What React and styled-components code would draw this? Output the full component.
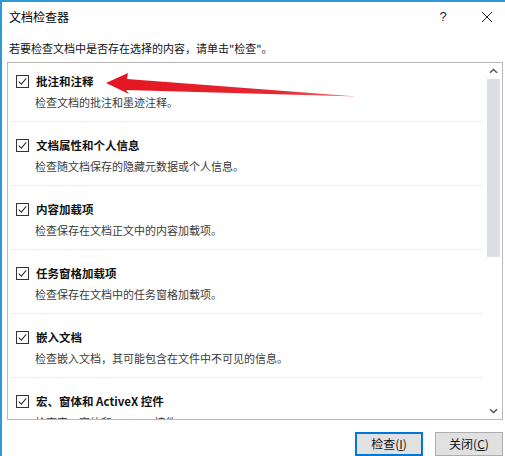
import React from "react";
import styled, { createGlobalStyle } from "styled-components";

const GlobalStyle = createGlobalStyle`
  html, body { margin: 0; padding: 0; background: #fff; }
  body { font-family: "Noto Sans CJK SC", "Noto Sans", sans-serif; }
  * { box-sizing: border-box; }
`;

const Window = styled.div`
  position: relative;
  width: 505px;
  height: 456px;
  background: #fff;
  border-left: 2px solid #2d9ad6;
  border-top: 2px solid #2d9ad6;
  overflow: hidden;
  display: flex;
  flex-direction: column;
  color: #000;
`;

const TitleBar = styled.div`
  height: 30px;
  display: flex;
  align-items: center;
  padding-left: 7px;
`;

const Title = styled.div`
  flex: 1;
  font-size: 12px;
  line-height: 14px;
`;

const Help = styled.div`
  width: 12px;
  text-align: center;
  font-size: 13px;
  line-height: 14px;
  color: #222;
  margin-right: 32px;
  font-family: "Liberation Sans", sans-serif;
`;

const Close = styled.div`
  width: 12px;
  height: 12px;
  margin-right: 12px;
  display: flex;
`;

const Instruction = styled.div`
  margin-top: 10px;
  padding-left: 7px;
  font-size: 11px;
  line-height: 14px;
  color: #111;
`;

const ListBox = styled.div`
  margin-top: 7px;
  margin-left: 5px;
  width: 496px;
  height: 358px;
  border: 1px solid #b9b9b9;
  display: flex;
`;

const Content = styled.div`
  flex: 1;
  overflow: hidden;
`;

const Item = styled.div`
  height: ${(p) => (p.$first ? 59 : 64)}px;
  padding-top: ${(p) => (p.$first ? 11 : 16)}px;
  margin-left: 4px;
  margin-right: 2px;
  padding-left: 4px;
  border-bottom: 1px solid #ededed;
`;

const TitleRow = styled.div`
  display: flex;
  align-items: center;
  gap: 7px;
  height: 14px;
`;

const ItemTitle = styled.div`
  font-size: 11.5px;
  line-height: 14px;
  font-weight: 700;
  color: #111;
`;

const Desc = styled.div`
  margin-top: 7px;
  padding-left: 19px;
  font-size: 11px;
  line-height: 14px;
  color: #3a3a3a;
  white-space: nowrap;
`;

const Scrollbar = styled.div`
  width: 17px;
  display: flex;
  flex-direction: column;
  align-items: center;
`;

const ArrowBtn = styled.div`
  height: 16px;
  width: 100%;
  display: flex;
  align-items: center;
  justify-content: center;
`;

const Track = styled.div`
  flex: 1;
  width: 100%;
  padding: 0 2px 0 2px;
`;

const Thumb = styled.div`
  width: 13px;
  height: 178px;
  background: #dcdfe5;
`;

const Footer = styled.div`
  margin-top: 12px;
  display: flex;
  justify-content: flex-end;
  gap: 12px;
  padding-right: 2px;
`;

const Button = styled.button`
  width: 68px;
  height: 24px;
  background: #e1e1e1;
  border: 1px solid ${(p) => (p.$primary ? "#0078d7" : "#adadad")};
  box-shadow: ${(p) => (p.$primary ? "inset 0 0 0 1px #0078d7" : "none")};
  font-family: "Noto Sans CJK SC", sans-serif;
  font-size: 12px;
  line-height: 14px;
  color: #111;
  padding: 0;
  display: flex;
  align-items: center;
  justify-content: center;
`;

const Under = styled.span`
  text-decoration: underline;
`;

const Overlay = styled.svg`
  position: absolute;
  left: -2px;
  top: -2px;
  pointer-events: none;
`;

const CheckBox = () => (
  <svg width="13" height="13" viewBox="0 0 13 13">
    <rect x="0.5" y="0.5" width="12" height="12" fill="#fff" stroke="#333" />
    <path d="M2.8 6.6 L5.3 9.1 L10.2 3.4" fill="none" stroke="#333" strokeWidth="1.1" />
  </svg>
);

const Chevron = ({ down }) => (
  <svg width="9" height="6" viewBox="0 0 9 6">
    <path
      d={down ? "M1 1.2 L4.5 4.6 L8 1.2" : "M1 4.8 L4.5 1.4 L8 4.8"}
      fill="none"
      stroke="#555"
      strokeWidth="1.4"
    />
  </svg>
);

const items = [
  ["批注和注释", "检查文档的批注和墨迹注释。"],
  ["文档属性和个人信息", "检查随文档保存的隐藏元数据或个人信息。"],
  ["内容加载项", "检查保存在文档正文中的内容加载项。"],
  ["任务窗格加载项", "检查保存在文档中的任务窗格加载项。"],
  ["嵌入文档", "检查嵌入文档，其可能包含在文件中不可见的信息。"],
  ["宏、窗体和 ActiveX 控件", "检查宏、窗体和 ActiveX 控件。"],
];

export default function App() {
  return (
    <>
      <GlobalStyle />
      <Window>
        <TitleBar>
          <Title>文档检查器</Title>
          <Help>?</Help>
          <Close>
            <svg width="12" height="12" viewBox="0 0 12 12">
              <path d="M1 1 L11 11 M11 1 L1 11" stroke="#222" strokeWidth="1" />
            </svg>
          </Close>
        </TitleBar>
        <Instruction>若要检查文档中是否存在选择的内容，请单击"检查"。</Instruction>
        <ListBox>
          <Content>
            {items.map(([t, d], i) => (
              <Item key={t} $first={i === 0}>
                <TitleRow>
                  <CheckBox />
                  <ItemTitle>{t}</ItemTitle>
                </TitleRow>
                <Desc>{d}</Desc>
              </Item>
            ))}
          </Content>
          <Scrollbar>
            <ArrowBtn>
              <Chevron />
            </ArrowBtn>
            <Track>
              <Thumb />
            </Track>
            <ArrowBtn>
              <Chevron down />
            </ArrowBtn>
          </Scrollbar>
        </ListBox>
        <Footer>
          <Button $primary>
            检查(<Under>I</Under>)
          </Button>
          <Button>
            关闭(<Under>C</Under>)
          </Button>
        </Footer>
        <Overlay width="505" height="456" viewBox="0 0 505 456">
          <defs>
            <linearGradient id="ag" x1="0" x2="1" y1="0" y2="0">
              <stop offset="0" stopColor="#e3141f" />
              <stop offset="0.7" stopColor="#e52a34" />
              <stop offset="1" stopColor="#f07a80" />
            </linearGradient>
          </defs>
          <polygon
            points="106,83 128,73 127,79 357,96.5 126,90 129,94"
            fill="url(#ag)"
          />
        </Overlay>
      </Window>
    </>
  );
}
